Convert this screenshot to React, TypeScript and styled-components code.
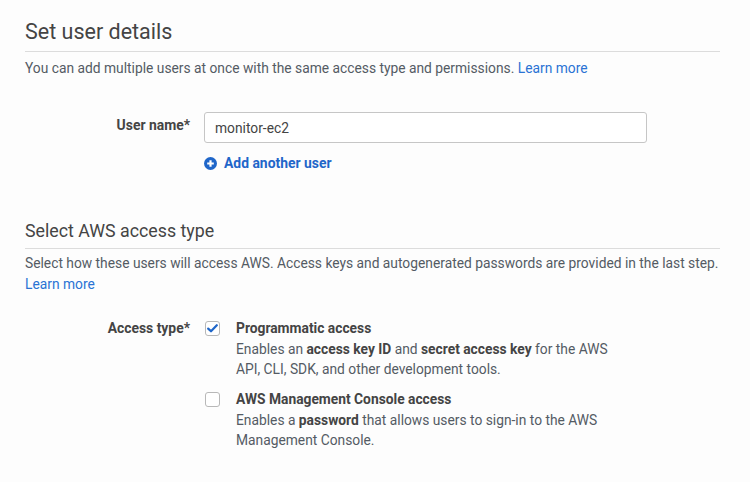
import React from "react";
import styled, { createGlobalStyle } from "styled-components";

const Global = createGlobalStyle`
  html, body { margin: 0; padding: 0; background: #fdfdfd; }
  body { font-family: Roboto, "Noto Sans", Arial, sans-serif; color: #444; }
  * { box-sizing: border-box; }
`;

const Page = styled.div`
  width: 750px;
  height: 482px;
  padding: 18px 30px 0 25px;
  overflow: hidden;
`;

const Section = styled.section<{ $top?: number }>`
  margin-top: ${(p) => p.$top ?? 0}px;
`;

const Heading = styled.h2<{ $size: number; $lh: number; $pb: number }>`
  margin: 0;
  font-size: ${(p) => p.$size}px;
  font-weight: 400;
  line-height: ${(p) => p.$lh}px;
  color: #444;
  padding-bottom: ${(p) => p.$pb}px;
  border-bottom: 1px solid #dcdcdc;
`;

const Description = styled.p<{ $top: number; $lh: number }>`
  margin: ${(p) => p.$top}px 0 0;
  font-size: 13.8px;
  line-height: ${(p) => p.$lh}px;
  color: #545b64;
`;

const Link = styled.a`
  color: #2a73d4;
  text-decoration: none;
`;

const FormRow = styled.div<{ $top: number }>`
  display: grid;
  grid-template-columns: 165px 1fr;
  column-gap: 14px;
  margin-top: ${(p) => p.$top}px;
`;

const Label = styled.label<{ $pt: number }>`
  text-align: right;
  font-size: 13.9px;
  font-weight: 700;
  color: #444;
  padding-top: ${(p) => p.$pt}px;
  line-height: 16px;
`;

const Control = styled.div`
  display: flex;
  flex-direction: column;
`;

const TextInput = styled.input`
  width: 443px;
  height: 31px;
  border: 1px solid #c6c6c6;
  border-radius: 3px;
  padding: 0 10px;
  font-family: Roboto, "Noto Sans", Arial, sans-serif;
  font-size: 13.8px;
  color: #444;
  background: #fff;
  outline: none;
`;

const AddLink = styled.a`
  display: flex;
  align-items: center;
  gap: 7px;
  margin-top: 12px;
  font-size: 13.9px;
  font-weight: 700;
  color: #1f66c9;
  text-decoration: none;
  line-height: 16px;
`;

const Options = styled.div`
  display: flex;
  flex-direction: column;
  gap: 9.5px;
`;

const Option = styled.div`
  display: grid;
  grid-template-columns: 15px 1fr;
  column-gap: 16px;
  padding-left: 1px;
`;

const Box = styled.span`
  width: 15px;
  height: 15px;
  margin-top: 3px;
  border: 1px solid #b8b8b8;
  border-radius: 3px;
  background: #fff;
  display: flex;
  align-items: center;
  justify-content: center;
`;

const OptText = styled.div`
  font-size: 13.8px;
  line-height: 20.5px;
  color: #545b64;
`;

const OptLine = styled.div`
  white-space: nowrap;
`;

const OptTitle = styled.div`
  font-weight: 700;
  color: #444;
`;

const B = styled.b`
  font-weight: 700;
  color: #444;
`;

const PlusIcon = () => (
  <svg width="13" height="13" viewBox="0 0 13 13">
    <circle cx="6.5" cy="6.5" r="6.5" fill="#1f66c9" />
    <path d="M6.5 3.2v6.6M3.2 6.5h6.6" stroke="#fff" strokeWidth="2.2" />
  </svg>
);

const Check = () => (
  <svg width="11" height="9" viewBox="0 0 11 9">
    <path d="M1.2 4.6 L4 7.3 L9.8 1.2" fill="none" stroke="#1f66c9" strokeWidth="2.2" strokeLinecap="round" strokeLinejoin="round" />
  </svg>
);

export default function App() {
  return (
    <>
      <Global />
      <Page>
        <Section>
          <Heading $size={21.5} $lh={28} $pb={5}>Set user details</Heading>
          <Description $top={6} $lh={20}>
            You can add multiple users at once with the same access type and permissions.{" "}
            <Link href="#">Learn more</Link>
          </Description>
          <FormRow $top={34}>
            <Label $pt={5}>User name*</Label>
            <Control>
              <TextInput defaultValue="monitor-ec2" />
              <AddLink href="#">
                <PlusIcon />
                Add another user
              </AddLink>
            </Control>
          </FormRow>
        </Section>
        <Section $top={48}>
          <Heading $size={17.8} $lh={24} $pb={5}>Select AWS access type</Heading>
          <Description $top={4} $lh={21}>
            Select how these users will access AWS. Access keys and autogenerated passwords are provided in the last step.
            <br />
            <Link href="#">Learn more</Link>
          </Description>
          <FormRow $top={23}>
            <Label $pt={2}>Access type*</Label>
            <Options>
              <Option>
                <Box>
                  <Check />
                </Box>
                <OptText>
                  <OptTitle>Programmatic access</OptTitle>
                  <OptLine>
                    Enables an <B>access key ID</B> and <B>secret access key</B> for the AWS
                  </OptLine>
                  <OptLine>API, CLI, SDK, and other development tools.</OptLine>
                </OptText>
              </Option>
              <Option>
                <Box />
                <OptText>
                  <OptTitle>AWS Management Console access</OptTitle>
                  <OptLine>
                    Enables a <B>password</B> that allows users to sign-in to the AWS
                  </OptLine>
                  <OptLine>Management Console.</OptLine>
                </OptText>
              </Option>
            </Options>
          </FormRow>
        </Section>
      </Page>
    </>
  );
}
